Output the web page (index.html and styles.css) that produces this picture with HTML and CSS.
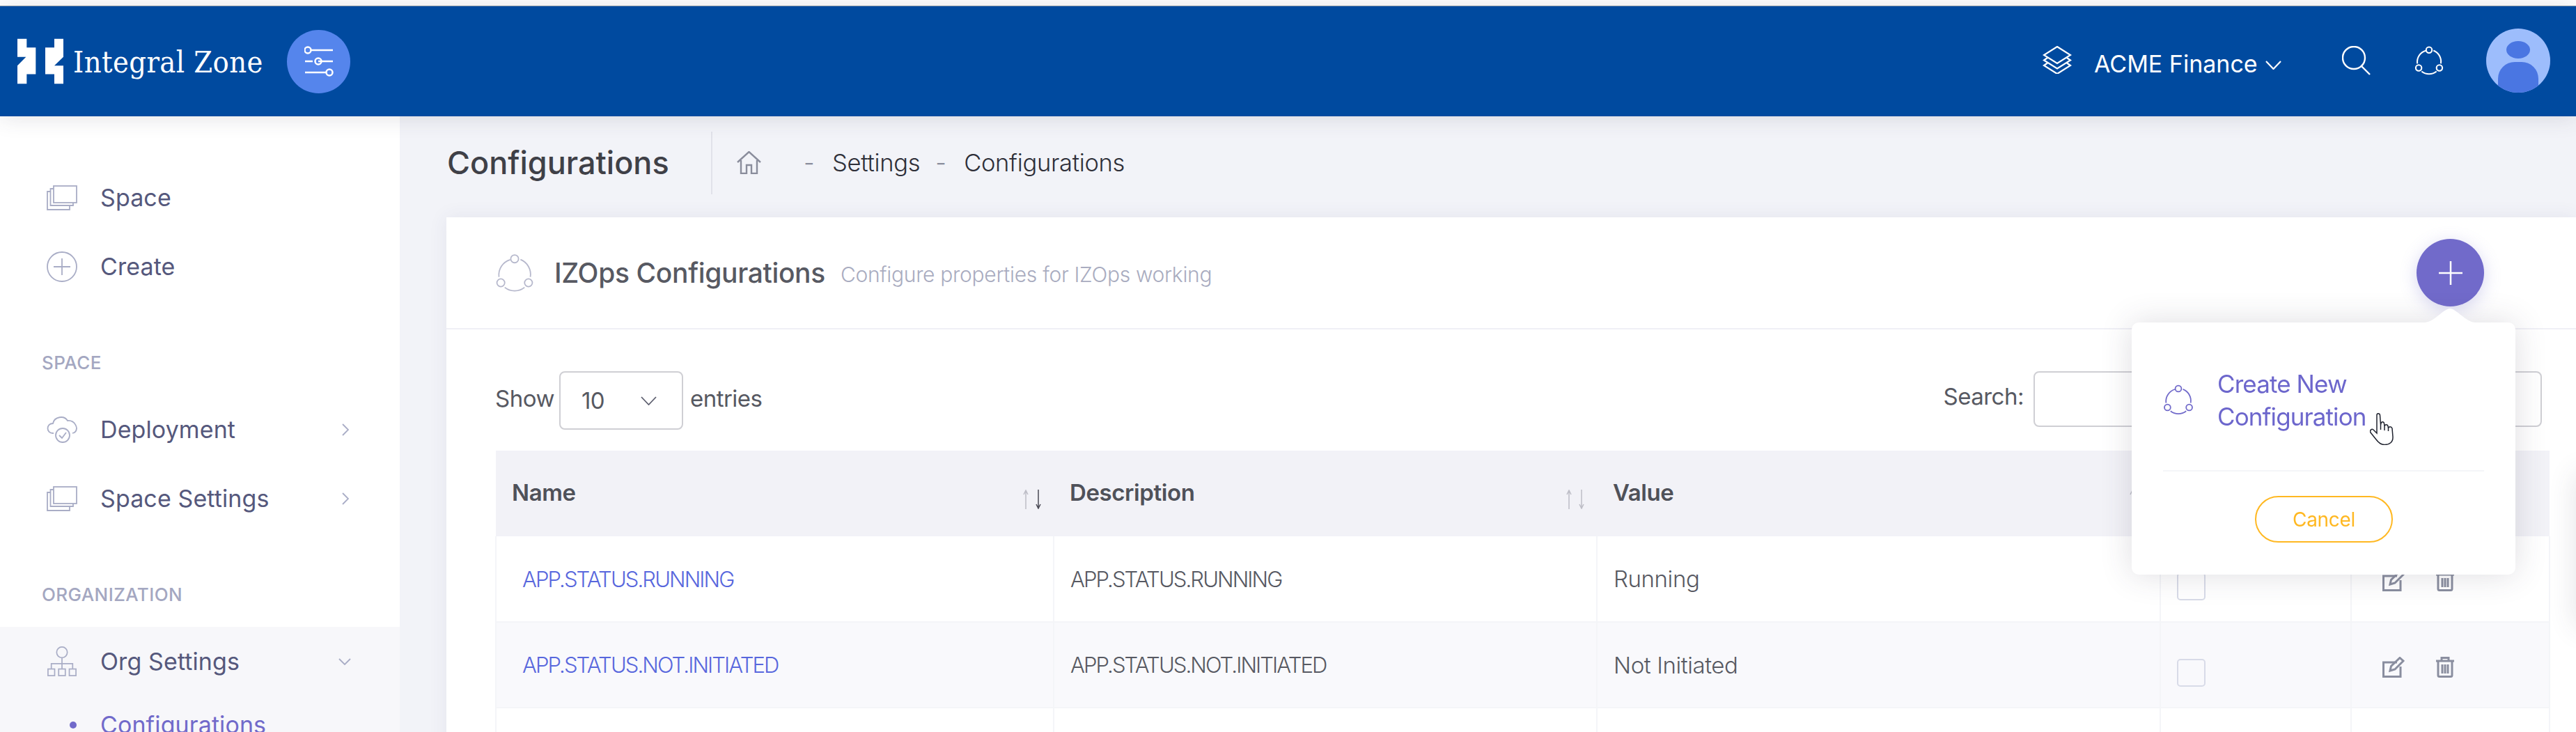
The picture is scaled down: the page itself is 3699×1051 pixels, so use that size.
FILE: index.html
```html
<!DOCTYPE html>
<html lang="en">
<head>
<meta charset="utf-8">
<title>IZOps Configurations</title>
<link rel="stylesheet" href="styles.css">
</head>
<body>
<svg class="defs" aria-hidden="true">
  <defs>
    <symbol id="net" viewBox="0 0 44 44">
      <circle cx="22" cy="6" r="4.4"/><circle cx="6.4" cy="33" r="4.4"/><circle cx="37.6" cy="33" r="4.4"/>
      <path d="M17 7A18 18 0 0 0 4.300 26.500M28.600 6.800A18 18 0 0 1 39.700 26.500M10.800 38.200A18 18 0 0 0 33.200 38.200"/>
    </symbol>
    <symbol id="stack" viewBox="0 0 44 36">
      <rect x="10" y="1" width="33" height="24"/>
      <path d="M10 5H5.500V29H38V25M5.500 9H1V35H33V29"/>
    </symbol>
    <symbol id="edit" viewBox="0 0 32 30">
      <path d="M21 8H1.500V28.500H26V14"/>
      <path d="M11 20L12.500 13.500L25 1.500L30 6L18 18Z"/>
    </symbol>
    <symbol id="trash" viewBox="0 0 26 30">
      <path d="M0 6H26M8 6V1.500H18V6M3 6V26.500Q3 28.500 5 28.500H21Q23 28.500 23 26.500V6M9 11V24M13 11V24M17 11V24"/>
    </symbol>
    <symbol id="sort" viewBox="0 0 28 28">
      <path class="up" d="M4 28V1M1 7L4 1L7 7"/>
      <path class="down" d="M22 0V27M19 21L22 27L25 21"/>
    </symbol>
  </defs>
</svg>

<header class="topbar">
  <div class="brand">
    <svg class="logo" viewBox="28 35 198 193"><path d="M28 35H68V72H107V187H68V228H28V150L65 113H28ZM187 35H226V113L187 150H226V228H187V187H148V72H187Z"/></svg>
    <span class="brand-name">Integral Zone</span>
    <span class="toggle">
      <svg viewBox="0 0 42 46"><path d="M10 7H41M1 23H12M20 23H41M1 39H31"/><circle cx="5" cy="7" r="4.500"/><circle cx="20" cy="23" r="4.500"/><circle cx="36" cy="39" r="4.500"/></svg>
    </span>
  </div>
  <div class="top-tools">
    <svg class="ico-layers" viewBox="0 0 42 40"><path d="M21 1L40 13L21 25L2 13ZM7 17L2 20.500L21 32.500L40 20.500L35 17M7 24.500L2 28L21 40L40 28L35 24.500"/></svg>
    <span class="org">ACME Finance</span>
    <svg class="ico-chev" viewBox="0 0 23 13"><path d="M1 1L11.500 12L22 1"/></svg>
    <svg class="ico-search" viewBox="0 0 42 42"><ellipse cx="17" cy="17" rx="16" ry="16"/><path d="M28 29L40 41"/></svg>
    <svg class="ico-net"><use href="#net"/></svg>
    <span class="avatar"><span class="avatar-head"></span><span class="avatar-body"></span></span>
  </div>
</header>

<div class="layout">
  <aside class="sidebar">
    <a class="nav-item"><svg class="nav-ico"><use href="#stack"/></svg><span>Space</span></a>
    <a class="nav-item"><svg class="nav-ico" viewBox="0 0 44 44"><circle cx="22" cy="22" r="21"/><path d="M22 10V34M10 22H34"/></svg><span>Create</span></a>
    <div class="nav-label">SPACE</div>
    <a class="nav-item"><svg class="nav-ico" viewBox="0 0 44 40"><path d="M10 25H9C-1 25 -1 11 9 11C11 1 25 -1 30 7C40 6 47 18 40 24L37 25"/><circle cx="23" cy="28" r="10"/><path d="M18 28L22 32L28 24"/></svg><span>Deployment</span><svg class="nav-chev" viewBox="0 0 10 18"><path d="M1 1L9 9L1 17"/></svg></a>
    <a class="nav-item"><svg class="nav-ico"><use href="#stack"/></svg><span>Space Settings</span><svg class="nav-chev" viewBox="0 0 10 18"><path d="M1 1L9 9L1 17"/></svg></a>
    <div class="nav-label">ORGANIZATION</div>
    <div class="nav-group">
      <a class="nav-item"><svg class="nav-ico" viewBox="0 0 44 46"><circle cx="22" cy="9" r="8"/><path d="M22 17V26M6 34V26H38V34M22 26V34"/><rect x="1" y="34" width="10" height="10"/><rect x="17" y="34" width="10" height="10"/><rect x="33" y="34" width="10" height="10"/></svg><span>Org Settings</span><svg class="nav-chev nav-chev-down" viewBox="0 0 18 10"><path d="M1 1L9 9L17 1"/></svg></a>
      <a class="nav-sub"><span class="nav-dot"></span><span>Configurations</span></a>
    </div>
  </aside>

  <main class="content">
    <div class="subheader">
      <h1 class="page-title">Configurations</h1>
      <nav class="crumbs">
        <svg class="ico-home" viewBox="0 0 35 33"><path d="M1 16L17.500 1L34 16M6 13V32H14V20H21V32H29V13"/></svg>
        <span class="dash">-</span><span>Settings</span><span class="dash">-</span><span>Configurations</span>
      </nav>
    </div>

    <section class="card">
      <div class="card-head">
        <div class="card-title-wrap">
          <svg class="ico-card"><use href="#net"/></svg>
          <h2 class="card-title">IZOps Configurations</h2>
          <span class="card-sub">Configure properties for IZOps working</span>
        </div>
        <button class="fab" type="button"><svg viewBox="0 0 34 34"><path d="M17 0V34M0 17H34"/></svg></button>
      </div>

      <div class="card-body">
        <div class="tools">
          <div class="length">
            <span>Show</span>
            <span class="select"><span>10</span><svg viewBox="0 0 23 13"><path d="M1 1L11.500 12L22 1"/></svg></span>
            <span>entries</span>
          </div>
          <div class="filter">
            <span>Search:</span>
            <span class="input"></span>
          </div>
        </div>

        <table class="grid">
          <colgroup><col class="c1"><col class="c2"><col class="c3"><col class="c4"><col class="c5"></colgroup>
          <thead>
            <tr>
              <th class="first"><div class="th-in"><span>Name</span><svg class="sort sort-active"><use href="#sort"/></svg></div></th>
              <th><div class="th-in"><span>Description</span><svg class="sort"><use href="#sort"/></svg></div></th>
              <th><div class="th-in"><span>Value</span><svg class="sort"><use href="#sort"/></svg></div></th>
              <th></th>
              <th></th>
            </tr>
          </thead>
          <tbody>
            <tr>
              <td class="link">APP.STATUS.RUNNING</td>
              <td class="caps">APP.STATUS.RUNNING</td>
              <td>Running</td>
              <td class="check-cell"><span class="check"></span></td>
              <td class="acts"><svg class="act-edit"><use href="#edit"/></svg><svg class="act-trash"><use href="#trash"/></svg></td>
            </tr>
            <tr class="alt">
              <td class="link">APP.STATUS.NOT.INITIATED</td>
              <td class="caps">APP.STATUS.NOT.INITIATED</td>
              <td>Not Initiated</td>
              <td class="check-cell"><span class="check"></span></td>
              <td class="acts"><svg class="act-edit"><use href="#edit"/></svg><svg class="act-trash"><use href="#trash"/></svg></td>
            </tr>
            <tr>
              <td>&nbsp;</td><td></td><td></td><td></td><td></td>
            </tr>
          </tbody>
        </table>
      </div>

      <div class="popup">
        <svg class="popup-arrow" viewBox="0 0 74 20"><path d="M0 20C14 20 28 0 37 0C46 0 60 20 74 20Z"/></svg>
        <a class="popup-link">
          <svg class="ico-popup"><use href="#net"/></svg>
          <span>Create New<br>Configuration</span>
        </a>
        <svg class="cursor" viewBox="0 0 34 46"><path d="M10 3C10 0 14 0 14.500 3L15.500 17L16 15C16.500 12 20 12 20.500 15L21 19C21.500 16 25.500 16 26 19L26.500 22C27 19 31 19 32 22L33 34C33.500 42 28 45.500 21 45.500C15 45.500 12 42 9 38L1 28C-.5 25 2.500 22 5 24L10 29Z"/><path d="M15.500 17V24M21 19V25M26.500 22V26"/></svg>
        <div class="popup-foot"><button class="btn-cancel" type="button">Cancel</button></div>
      </div>
    </section>
  </main>
</div>
<div class="edge-dock"></div>
</body>
</html>
```

FILE: styles.css
```css
* { box-sizing: border-box; }
html, body { margin: 0; height: 100%; overflow: hidden; }
body {
  height: 1051px;
  display: flex;
  flex-direction: column;
  font-family: Inter, "Noto Sans", sans-serif;
  color: #575962;
  background: #fff;
  padding-top: 8px;
}
svg { fill: none; stroke: currentColor; display: block; flex: none; }
.defs { width: 0; height: 0; position: absolute; }
a { display: flex; }
.up { stroke: var(--sort-up, currentColor); }

/* top bar */
.topbar {
  flex: none;
  height: 159px;
  background: #004a9f;
  border-top: 1px solid #9aa3ad;
  display: flex;
  align-items: center;
  justify-content: space-between;
  color: #fff;
  position: relative;
  z-index: 2;
  box-shadow: 0 2px 30px rgba(60, 60, 80, .14);
  padding: 0 37px 0 25px;
}
.brand { display: flex; align-items: center; }
.logo { width: 66px; height: 66px; fill: #fff; stroke: none; }
.brand-name {
  margin-left: 14px;
  width: 307px;
  font: 400 43px/50px "DejaVu Serif Condensed", "Liberation Serif", serif;
  letter-spacing: .4px;
  white-space: nowrap;
  color: #fff;
  margin-top: 2px;
}
.toggle {
  width: 91px;
  height: 91px;
  border-radius: 50%;
  background: #5585ec;
  display: flex;
  align-items: center;
  justify-content: center;
}
.toggle svg { width: 42px; height: 46px; stroke-width: 2.500; }
.top-tools { display: flex; align-items: center; }
.ico-layers { width: 42px; height: 40px; stroke-width: 2.200; margin-top: -4px; }
.org { margin-left: 32px; font-size: 34px; line-height: 44px; font-weight: 400; letter-spacing: 0; width: 234px; white-space: nowrap; margin-top: 8px; }
.ico-chev { width: 23px; height: 13px; margin-left: 12px; stroke-width: 2.200; margin-top: 10px; }
.ico-search { width: 42px; height: 42px; stroke-width: 2.400; margin-left: 87px; margin-top: -2px; }
.ico-net { width: 44px; height: 42px; stroke-width: 2.200; margin-left: 61px; margin-top: -2px; }
.avatar {
  width: 92px;
  height: 92px;
  border-radius: 50%;
  background: #9dbdfc;
  margin-left: 60px;
  overflow: hidden;
  display: flex;
  flex-direction: column;
  align-items: center;
  margin-top: -2px;
}
.avatar-head { width: 34px; height: 35px; border-radius: 50%; background: #4a76e2; margin-top: 18px; }
.avatar-body { width: 58px; height: 60px; border-radius: 24px 24px 0 0; background: #4a76e2; margin-top: 5px; }

.layout { flex: 1; display: flex; min-height: 0; }

/* sidebar */
.sidebar {
  flex: none;
  width: 574px;
  background: #fff;
  padding-top: 67px;
  color: #55587c;
  font-size: 34px;
}
.nav-item {
  height: 99px;
  align-items: center;
  padding-left: 67px;
  letter-spacing: .1px;
  line-height: 44px;
}
.nav-ico { width: 44px; height: 44px; margin-right: 33px; color: #a9adc6; stroke-width: 1.800; }
.nav-chev { width: 10px; height: 18px; margin-left: auto; margin-right: 73px; color: #a9adc6; stroke-width: 1.800; }
.nav-chev-down { width: 18px; height: 10px; margin-right: 70px; }
.nav-label {
  height: 46px;
  margin: 66px 0 23px;
  padding-left: 60px;
  font-size: 26px;
  line-height: 46px;
  font-weight: 500;
  color: #a4a7c1;
  letter-spacing: .4px;
}
.nav-group { background: #f7f7fa; height: 200px; }
.nav-sub { align-items: center; height: 46px; margin-top: 19px; padding-left: 100px; color: #716aca; line-height: 46px; letter-spacing: .1px; }
.nav-dot { width: 10px; height: 10px; border-radius: 50%; background: #716aca; margin-right: 34px; }

/* content */
.content { flex: 1; min-width: 0; background: #f2f3f8; padding-left: 67px; display: flex; flex-direction: column; }
.subheader { flex: none; height: 145px; display: flex; align-items: center; }
.page-title { margin: -12px 0 0 1px; width: 379px; font-size: 45px; line-height: 60px; font-weight: 500; color: #3f4047; letter-spacing: 0; white-space: nowrap; }
.crumbs {
  height: 90px;
  display: flex;
  align-items: center;
  border-left: 2px solid #e1e2ea;
  padding-left: 35px;
  font-size: 34.500px;
  font-weight: 300;
  color: #2e2f38;
  letter-spacing: -.3px;
  white-space: nowrap;
  margin-top: -12px;
}
.ico-home { width: 35px; height: 33px; color: #8a8d9c; stroke-width: 2.400; margin-right: 61px; }
.dash { color: #8a8d9c; width: 41px; }
.crumbs span + .dash { margin-left: 22px; }

.card { flex: 1; background: #fff; position: relative; box-shadow: 0 0 26px rgba(69, 65, 120, .08); }
.card-head {
  height: 161px;
  border-bottom: 2px solid #f0f0f6;
  padding: 0 132px 0 69px;
  display: flex;
  align-items: center;
  justify-content: space-between;
}
.card-title-wrap { display: flex; align-items: center; }
.ico-card { width: 58px; height: 56px; color: #b6b8cc; stroke-width: 1.400; margin-right: 28px; }
.card-title { margin: 0; font-size: 39px; line-height: 50px; font-weight: 500; color: #575962; letter-spacing: -.35px; white-space: nowrap; }
.card-sub { margin-left: 22px; font-size: 30px; line-height: 50px; font-weight: 300; color: #a9acc0; letter-spacing: -.3px; white-space: nowrap; margin-top: 4px; }
.fab {
  width: 97px;
  height: 97px;
  padding: 0;
  border: 0;
  border-radius: 50%;
  background: #716aca;
  color: #fff;
  display: flex;
  align-items: center;
  justify-content: center;
  box-shadow: 0 6px 24px rgba(113, 106, 202, .28);
}
.fab svg { width: 34px; height: 34px; stroke-width: 2.500; }

.card-body { padding: 60px 39px 0 70px; }
.tools { display: flex; justify-content: space-between; height: 114px; font-size: 33px; color: #575962; font-weight: 400; }
.length { display: flex; align-items: flex-start; height: 84px; line-height: 78px; letter-spacing: -.5px; }
.select {
  width: 178px;
  height: 84px;
  margin: 0 10px 0 7px;
  border: 2px solid #cfcfd4;
  border-radius: 8px;
  display: flex;
  align-items: center;
  justify-content: space-between;
  padding: 0 36px 0 30px;
  line-height: 80px;
}
.select svg { width: 23px; height: 13px; stroke-width: 1.800; color: #5e6070; }
.filter { display: flex; align-items: flex-start; line-height: 72px; letter-spacing: -.5px; }
.input { width: 730px; height: 80px; margin: 0 10px 0 14px; border: 2px solid #cfcfd4; border-radius: 8px; background: #fff; }

.grid { border-collapse: collapse; table-layout: fixed; width: 2949px; font-size: 33px; --sort-up: #bdbdc6; }
.c1 { width: 801px; } .c2 { width: 780px; } .c3 { width: 809px; } .c4 { width: 274px; } .c5 { width: 285px; }
.grid th { background: #f2f2f7; height: 123px; padding: 0 16px 4px 23px; text-align: left; font-weight: 600; font-size: 33px; color: #4f5159; letter-spacing: -.4px; }
.th-in { display: flex; justify-content: space-between; align-items: center; }
.sort { width: 28px; height: 28px; margin-top: 20px; color: #bdbdc6; stroke-width: 1.500; }
.sort-active { color: #4a4a55; }
.grid td { height: 123px; padding: 0 0 0 23px; border: 2px solid #f4f5f8; border-top: 0; color: #575962; font-weight: 300; letter-spacing: -.4px; white-space: nowrap; }
.grid tr.alt td { background: #f9f9fc; }
.grid td.caps, .grid td.link { font-size: 31px; letter-spacing: -1.9px; }
.grid td.link { padding-left: 37px; color: #5867dd; }
.check-cell { padding-left: 23px !important; }
.check { display: block; width: 41px; height: 40px; margin-top: 22px; border: 2px solid #d8dbe8; border-radius: 5px; }
.acts { padding-left: 44px !important; }
.acts svg { display: inline-block; vertical-align: middle; color: #8a8e9f; stroke-width: 3; }
.act-edit { width: 32px; height: 30px; margin-right: 45px; }
.act-trash { width: 26px; height: 30px; }

/* popup */
.popup {
  position: absolute;
  left: 2420px;
  top: 151px;
  width: 551px;
  height: 362px;
  background: #fff;
  border-radius: 10px;
  box-shadow: 0 0 45px rgba(60, 55, 80, .17);
  padding: 0 45px;
  z-index: 3;
}
.popup-arrow { position: absolute; left: 420px; top: -20px; width: 74px; height: 20px; fill: #fff; stroke: none; }
.popup-link { height: 214px; align-items: center; color: #6c66cc; font-size: 35px; line-height: 47px; letter-spacing: -.9px; border-bottom: 2px solid #f4f5f8; white-space: nowrap; padding-top: 12px; }
.ico-popup { width: 44px; height: 44px; stroke-width: 1.800; margin-right: 34px; color: #716aca; margin-top: -2px; }
.cursor { position: absolute; left: 342px; top: 130px; width: 34px; height: 46px; fill: #fff; color: #20232f; stroke-width: 1.500; }
.popup-foot { display: flex; justify-content: flex-start; padding: 35px 0 0 132px; }
.btn-cancel { width: 198px; height: 67px; padding: 0; background: #fff; border: 2.500px solid #ffb822; border-radius: 34px; color: #ffb822; font: 400 28px/62px Inter, sans-serif; letter-spacing: -.3px; }

.edge-dock { position: fixed; left: 3699px; top: 680px; width: 60px; height: 220px; box-shadow: 0 0 40px rgba(60, 60, 80, .14); }
```
